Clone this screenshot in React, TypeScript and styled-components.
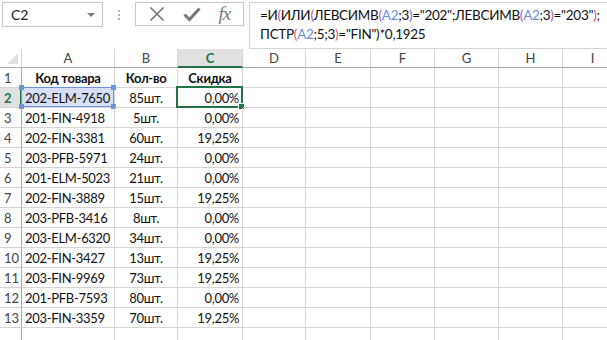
import React from "react";
import styled, { createGlobalStyle } from "styled-components";

const GlobalStyle = createGlobalStyle`
  html, body {
    margin: 0;
    padding: 0;
    background: #ffffff;
    overflow: hidden;
  }
  body {
    font-family: "Lato", "Liberation Sans", sans-serif;
  }
`;

const COLS = [
  { key: "A", w: 93 },
  { key: "B", w: 63 },
  { key: "C", w: 65 },
  { key: "D", w: 63 },
  { key: "E", w: 65 },
  { key: "F", w: 64 },
  { key: "G", w: 64 },
  { key: "H", w: 64 },
  { key: "I", w: 60 },
];

const ROWS: [string, string, string][] = [
  ["Код товара", "Кол-во", "Скидка"],
  ["202-ELM-7650", "85шт.", "0,00%"],
  ["201-FIN-4918", "5шт.", "0,00%"],
  ["202-FIN-3381", "60шт.", "19,25%"],
  ["203-PFB-5971", "24шт.", "0,00%"],
  ["201-ELM-5023", "21шт.", "0,00%"],
  ["202-FIN-3889", "15шт.", "19,25%"],
  ["203-PFB-3416", "8шт.", "0,00%"],
  ["203-ELM-6320", "34шт.", "0,00%"],
  ["202-FIN-3427", "13шт.", "19,25%"],
  ["203-FIN-9969", "73шт.", "19,25%"],
  ["201-PFB-7593", "80шт.", "0,00%"],
  ["203-FIN-3359", "70шт.", "19,25%"],
];

const Page = styled.div`
  width: 607px;
  height: 340px;
  overflow: hidden;
  display: flex;
  flex-direction: column;
`;

const FormulaBar = styled.div`
  display: flex;
  align-items: flex-start;
  height: 58px;
  padding-top: 2px;
  box-sizing: border-box;
`;

const NameBox = styled.div`
  margin-left: 2px;
  width: 101px;
  height: 25px;
  box-sizing: border-box;
  border: 1px solid #c6c6c6;
  display: flex;
  align-items: center;
  justify-content: space-between;
  padding: 0 7px 0 8px;
  font-size: 14px;
  color: #222;
`;

const DropArrow = styled.span`
  width: 0;
  height: 0;
  border-left: 4px solid transparent;
  border-right: 4px solid transparent;
  border-top: 4px solid #777;
`;

const Grip = styled.div`
  width: 32px;
  height: 25px;
  display: flex;
  flex-direction: column;
  align-items: center;
  justify-content: center;
  gap: 2px;
`;

const GripDot = styled.span`
  width: 2px;
  height: 2px;
  background: #b5b5b5;
`;

const ButtonBox = styled.div`
  width: 109px;
  height: 24px;
  box-sizing: border-box;
  border: 1px solid #c6c6c6;
  display: flex;
  align-items: center;
  justify-content: space-around;
  padding: 0 4px;
`;

const Fx = styled.span`
  font-family: "Liberation Serif", "DejaVu Serif", serif;
  font-style: italic;
  font-size: 19px;
  color: #777;
  letter-spacing: -1px;
`;

const FormulaBox = styled.div`
  margin-left: 5px;
  flex: 1;
  height: 47px;
  box-sizing: border-box;
  border: 1px solid #d4d4d4;
  border-right: none;
  padding: 3px 0 0 10px;
  font-size: 13.5px;
  letter-spacing: -0.3px;
  line-height: 19px;
  color: #111;
  white-space: nowrap;
  overflow: hidden;
`;

const Tok = styled.span<{ $c: string }>`
  color: ${(p) => p.$c};
`;

const Sheet = styled.div`
  display: grid;
  grid-template-columns: 22px ${COLS.map((c) => `${c.w}px`).join(" ")};
  grid-template-rows: 19px repeat(${ROWS.length + 1}, 20px);
  font-size: 13px;
  letter-spacing: -0.3px;
  color: #111;
`;

const Corner = styled.div`
  border-right: 1px solid #d4d4d4;
  border-bottom: 1px solid #ababab;
  position: relative;
  overflow: hidden;
  &::after {
    content: "";
    position: absolute;
    right: 3px;
    bottom: 3px;
    border-left: 11px solid transparent;
    border-bottom: 11px solid #dfdfdf;
  }
`;

const ColHead = styled.div<{ $active?: boolean }>`
  box-sizing: border-box;
  border-right: 1px solid #d4d4d4;
  border-bottom: ${(p) => (p.$active ? "2px solid #217346" : "1px solid #ababab")};
  background: ${(p) => (p.$active ? "#e1e1e1" : "#ffffff")};
  color: ${(p) => (p.$active ? "#217346" : "#444")};
  font-weight: ${(p) => (p.$active ? 700 : 400)};
  display: flex;
  align-items: center;
  justify-content: center;
  font-size: 13px;
  letter-spacing: 0;
`;

const RowHead = styled.div<{ $active?: boolean }>`
  box-sizing: border-box;
  border-right: ${(p) => (p.$active ? "2px solid #217346" : "1px solid #ababab")};
  border-bottom: 1px solid #d4d4d4;
  background: ${(p) => (p.$active ? "#e1e1e1" : "#ffffff")};
  color: ${(p) => (p.$active ? "#217346" : "#444")};
  font-weight: ${(p) => (p.$active ? 700 : 400)};
  display: flex;
  align-items: center;
  padding-left: 4px;
  font-size: 13px;
  letter-spacing: 0;
`;

const Cell = styled.div<{ $align: string; $bold?: boolean }>`
  box-sizing: border-box;
  border-right: 1px solid #d4d4d4;
  border-bottom: 1px solid #d4d4d4;
  display: flex;
  align-items: center;
  justify-content: ${(p) => p.$align};
  padding: 0 3px;
  font-weight: ${(p) => (p.$bold ? 700 : 400)};
  white-space: nowrap;
  position: relative;
`;

const RefHighlight = styled.div`
  position: absolute;
  inset: -1px 0 0 -1px;
  background: rgba(120, 150, 225, 0.3);
  border: 1px solid #6f92dc;
  pointer-events: none;
  &::before,
  &::after {
    content: "";
    position: absolute;
    width: 5px;
    height: 5px;
    background: #6f92dc;
  }
  &::before {
    left: -3px;
    top: -3px;
  }
  &::after {
    right: -3px;
    bottom: -3px;
  }
`;

const RefCorner = styled.span<{ $pos: "tr" | "bl" }>`
  position: absolute;
  width: 5px;
  height: 5px;
  background: #6f92dc;
  ${(p) => (p.$pos === "tr" ? "right: -3px; top: -3px;" : "left: -3px; bottom: -3px;")}
`;

const ActiveCell = styled.div`
  position: absolute;
  inset: -2px -1px -1px -2px;
  border: 2px solid #217346;
  pointer-events: none;
  &::after {
    content: "";
    position: absolute;
    right: -4px;
    bottom: -4px;
    width: 5px;
    height: 5px;
    background: #217346;
    border: 1px solid #fff;
  }
`;

const CellText = styled.span`
  position: relative;
`;

const alignFor = (col: number, row: number) => {
  if (row === 0) return "center";
  if (col === 0) return "flex-start";
  if (col === 1) return "center";
  return "flex-end";
};

export default function App() {
  const P = "#e0546a";
  const V = "#9b5fc6";
  const R = "#6b8fdc";
  return (
    <Page>
      <GlobalStyle />
      <FormulaBar>
        <NameBox>
          <span>C2</span>
          <DropArrow />
        </NameBox>
        <Grip>
          <GripDot />
          <GripDot />
          <GripDot />
        </Grip>
        <ButtonBox>
          <svg width="16" height="16" viewBox="0 0 16 16">
            <path d="M1.5 1.5 L14.5 14.5 M14.5 1.5 L1.5 14.5" stroke="#777" strokeWidth="1.6" fill="none" />
          </svg>
          <svg width="18" height="16" viewBox="0 0 18 16">
            <path d="M1.5 8.5 L6.5 13.5 L16.5 2.5" stroke="#777" strokeWidth="3" fill="none" />
          </svg>
          <Fx>fx</Fx>
        </ButtonBox>
        <FormulaBox>
          <div>
            =И<Tok $c={P}>(</Tok>ИЛИ<Tok $c={V}>(</Tok>ЛЕВСИМВ<Tok $c={V}>(</Tok>
            <Tok $c={R}>A2</Tok>;3<Tok $c={V}>)</Tok>="202";ЛЕВСИМВ<Tok $c={V}>(</Tok>
            <Tok $c={R}>A2</Tok>;3<Tok $c={V}>)</Tok>="203"<Tok $c={P}>)</Tok>;
          </div>
          <div>
            ПСТР<Tok $c={P}>(</Tok>
            <Tok $c={R}>A2</Tok>;5;3<Tok $c={P}>)</Tok>="FIN")*0,1925
          </div>
        </FormulaBox>
      </FormulaBar>
      <Sheet>
        <Corner />
        {COLS.map((c) => (
          <ColHead key={c.key} $active={c.key === "C"}>
            {c.key}
          </ColHead>
        ))}
        {ROWS.map((r, ri) => (
          <React.Fragment key={ri}>
            <RowHead $active={ri === 1}>{ri + 1}</RowHead>
            {COLS.map((c, ci) => {
              const v = ci < 3 ? r[ci] : "";
              return (
                <Cell key={c.key} $align={alignFor(ci, ri)} $bold={ri === 0}>
                  {ri === 1 && ci === 0 && (
                    <RefHighlight>
                      <RefCorner $pos="tr" />
                      <RefCorner $pos="bl" />
                    </RefHighlight>
                  )}
                  {ri === 1 && ci === 2 && <ActiveCell />}
                  <CellText>{v}</CellText>
                </Cell>
              );
            })}
          </React.Fragment>
        ))}
        <RowHead />
        {COLS.map((c) => (
          <Cell key={`last-${c.key}`} $align="flex-start" />
        ))}
      </Sheet>
    </Page>
  );
}
